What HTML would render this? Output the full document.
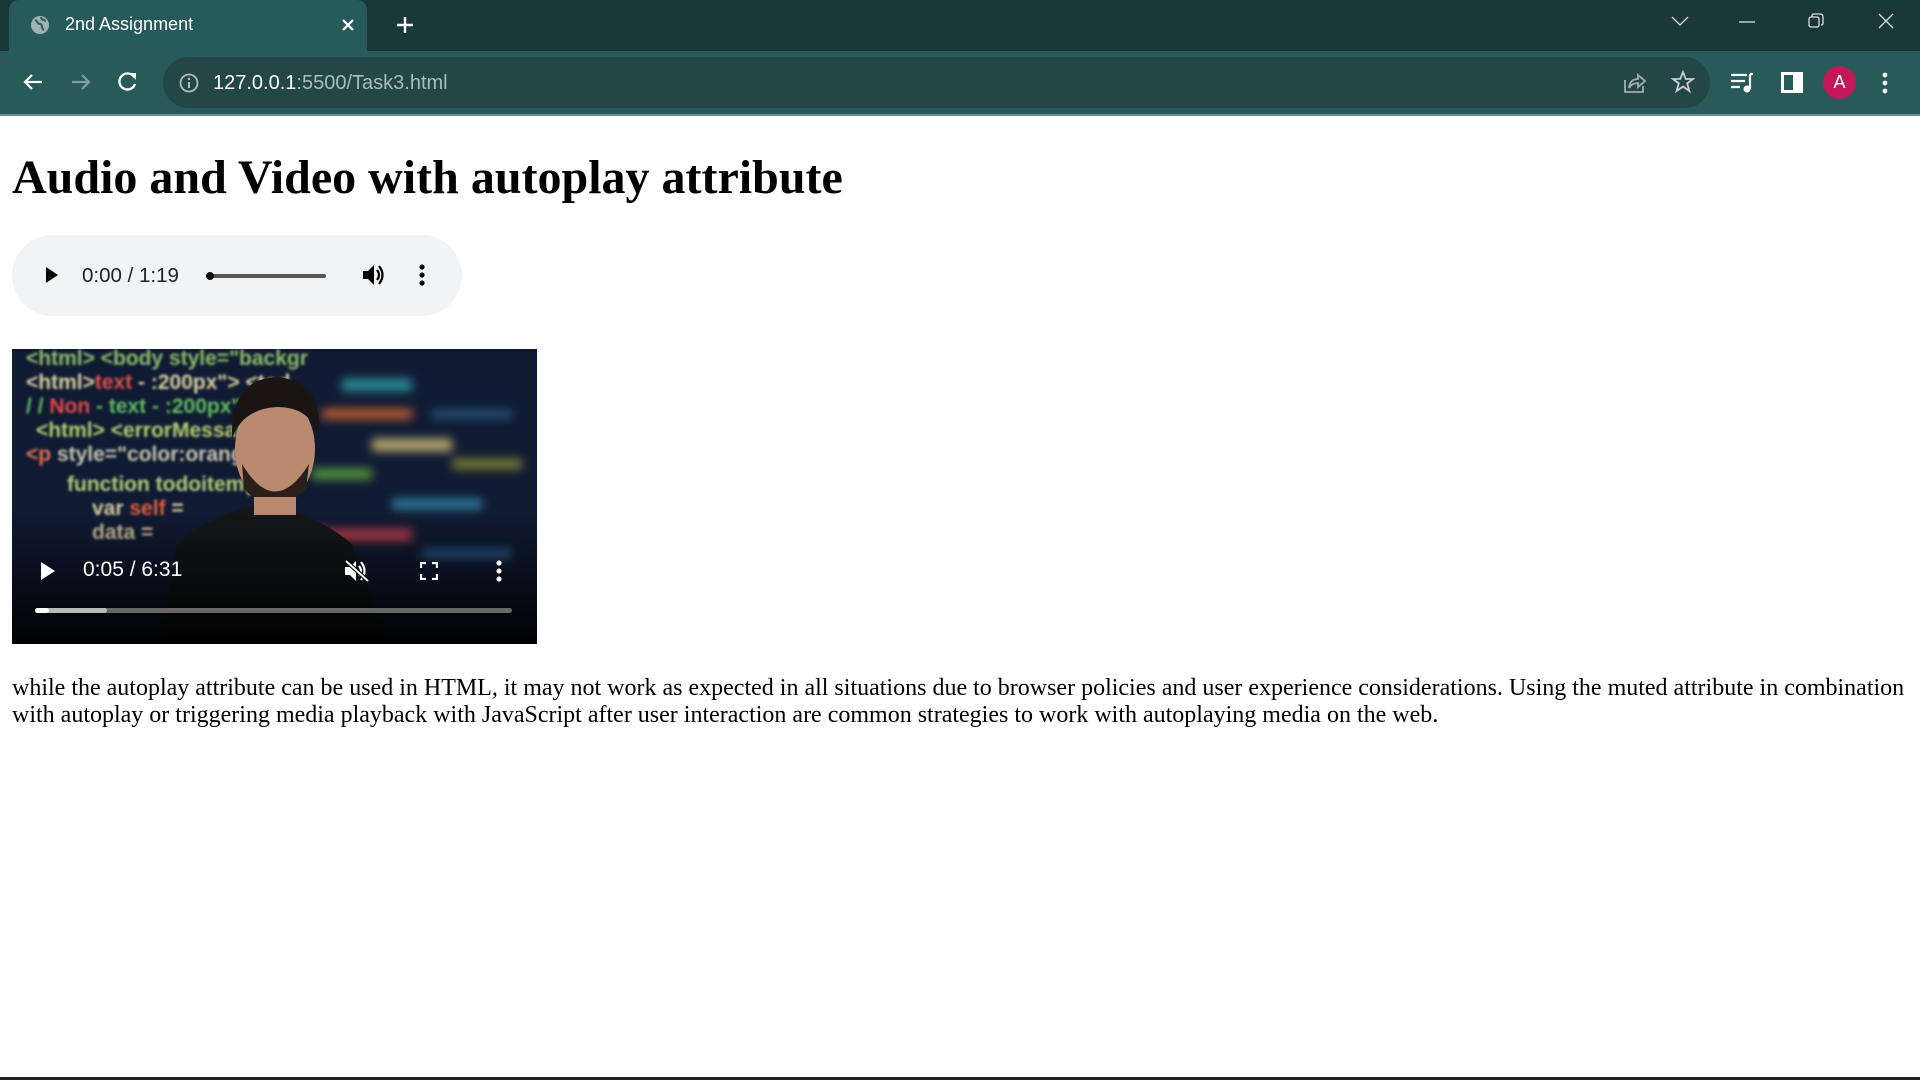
<!DOCTYPE html>
<html><head><meta charset="utf-8"><style>
*{margin:0;padding:0;box-sizing:border-box}
body{width:1920px;height:1080px;overflow:hidden;background:#fff;font-family:"Liberation Serif",serif;position:relative}
.top{position:absolute;left:0;top:0;width:1920px;height:51px;background:#1b3839}
.tab{position:absolute;left:9px;top:0;width:358px;height:53px;background:#275a5a;border-radius:10px 10px 0 0}
.tabt{position:absolute;left:65px;top:14px;color:#fff;font:18px "Liberation Sans",sans-serif}
.tb{position:absolute;left:0;top:51px;width:1920px;height:63px;background:#285a5a}
.omni{position:absolute;left:163px;top:57px;width:1547px;height:51px;background:#234647;border-radius:26px}
.url{position:absolute;left:213px;top:71px;font:20px "Liberation Sans",sans-serif;color:#fff}
.url span{color:#a9bcbc}
.line{position:absolute;left:0;top:114px;width:1920px;height:2px;background:#6e8c8c}
h1{position:absolute;left:12px;top:150px;font:bold 48px "Liberation Serif",serif;color:#000;white-space:nowrap}
.audio{position:absolute;left:12px;top:235px;width:450px;height:81px;background:#f1f3f4;border-radius:41px;font:20.5px "Liberation Sans",sans-serif;color:#222}
.video{position:absolute;left:12px;top:349px;width:525px;height:295px;overflow:hidden;background:#0c1426}
p{position:absolute;left:12px;top:675px;width:1900px;font-size:24px;line-height:27px;color:#000}
.bot{position:absolute;left:0;bottom:0;width:1920px;height:3px;background:#222}
</style></head><body>
<div class="top"></div>
<div class="tab"></div>
<svg style="position:absolute;left:30px;top:15px" width="20" height="20" viewBox="0 0 20 20"><circle cx="10" cy="10" r="9" fill="#9fb3b3"/><path d="M5 5c3 1 2 4 5 4s1 5 4 6M11 2c0 3 3 3 5 4" stroke="#275a5a" stroke-width="2" fill="none"/></svg>
<div class="tabt">2nd Assignment</div>
<svg style="position:absolute;left:341px;top:18px" width="14" height="14"><path d="M2 2L12 12M12 2L2 12" stroke="#fff" stroke-width="2.2"/></svg>
<svg style="position:absolute;left:396px;top:16px" width="18" height="18"><path d="M9 1V17M1 9H17" stroke="#fff" stroke-width="2.4"/></svg>
<svg style="position:absolute;left:1670px;top:14px" width="20" height="14"><path d="M2 3L10 11L18 3" stroke="#ddd" stroke-width="1.3" fill="none"/></svg>
<svg style="position:absolute;left:1739px;top:20px" width="16" height="4"><path d="M0 2H16" stroke="#ddd" stroke-width="1.3"/></svg>
<svg style="position:absolute;left:1808px;top:13px" width="16" height="16"><rect x="1" y="4" width="10" height="10" rx="2" stroke="#ddd" fill="none" stroke-width="1.3"/><path d="M4 4V2.5Q4 1 6 1H12Q15 1 15 4V10Q15 12 13 12" stroke="#ddd" fill="none" stroke-width="1.3"/></svg>
<svg style="position:absolute;left:1878px;top:13px" width="16" height="16"><path d="M1 1L15 15M15 1L1 15" stroke="#ddd" stroke-width="1.3"/></svg>
<div class="tb"></div>
<svg style="position:absolute;left:22px;top:72px" width="22" height="20"><path d="M20 10H3M10 3L3 10L10 17" stroke="#fff" stroke-width="2.2" fill="none"/></svg>
<svg style="position:absolute;left:70px;top:72px" width="22" height="20"><path d="M2 10H19M12 3L19 10L12 17" stroke="#7fa0a0" stroke-width="2.2" fill="none"/></svg>
<svg style="position:absolute;left:117px;top:71px" width="22" height="22"><path d="M17 6A8 8 0 1 0 18 13" stroke="#fff" stroke-width="2.3" fill="none"/><path d="M12 2H19V9Z" fill="#fff"/></svg>
<div class="omni"></div>
<svg style="position:absolute;left:179px;top:73px" width="20" height="20"><circle cx="10" cy="10" r="8.5" stroke="#bbb" stroke-width="1.8" fill="none"/><path d="M10 9V15" stroke="#bbb" stroke-width="2"/><circle cx="10" cy="6" r="1.2" fill="#bbb"/></svg>
<div class="url" style="top:72px">127.0.0.1<span>:5500/Task3.html</span></div>
<svg style="position:absolute;left:1622px;top:70px" width="24" height="24"><path d="M3 10V22H21V16" stroke="#aaa" stroke-width="1.8" fill="none"/><path d="M7 18Q8 9 16 9V5L23 11L16 17V13Q10 13 7 18Z" stroke="#aaa" stroke-width="1.8" fill="none"/></svg>
<svg style="position:absolute;left:1671px;top:70px" width="24" height="24"><path d="M12 2L14.8 9H22L16.2 13.4L18.4 21L12 16.5L5.6 21L7.8 13.4L2 9H9.2Z" stroke="#ccc" stroke-width="1.8" fill="none"/></svg>
<svg style="position:absolute;left:1730px;top:72px" width="24" height="22"><path d="M1 3H17M1 9H15M1 15H10" stroke="#fff" stroke-width="2.2"/><path d="M20 2V17" stroke="#fff" stroke-width="2.2"/><path d="M20 2H23" stroke="#fff" stroke-width="2.2"/><circle cx="17" cy="17" r="3.5" fill="#fff"/></svg>
<svg style="position:absolute;left:1781px;top:72px" width="22" height="21"><rect x="1.5" y="1.5" width="19" height="18" stroke="#fff" stroke-width="3" fill="none"/><rect x="12" y="1" width="9" height="19" fill="#fff"/></svg>
<div style="position:absolute;left:1823px;top:66px;width:33px;height:33px;border-radius:50%;background:#c2185b;color:#fff;font:18px 'Liberation Sans',sans-serif;text-align:center;line-height:33px">A</div>
<svg style="position:absolute;left:1881px;top:71px" width="8" height="24"><circle cx="4" cy="4" r="2.4" fill="#fff"/><circle cx="4" cy="12" r="2.4" fill="#fff"/><circle cx="4" cy="20" r="2.4" fill="#fff"/></svg>
<div class="line"></div>

<h1>Audio and Video with autoplay attribute</h1>

<div class="audio">
<svg style="position:absolute;left:32px;top:30px" width="16" height="20"><path d="M2 2L14 10L2 18Z" fill="#000"/></svg>
<div style="position:absolute;left:70px;top:29px">0:00 / 1:19</div>
<div style="position:absolute;left:194px;top:39px;width:120px;height:4px;border-radius:2px;background:#555"></div>
<div style="position:absolute;left:194px;top:37px;width:8px;height:8px;border-radius:50%;background:#111"></div>
<svg style="position:absolute;left:350px;top:29px" width="26" height="22"><path d="M1 7H6L12 1V21L6 15H1Z" fill="#000"/><path d="M15 6Q19 11 15 16M17 2Q24 11 17 20" stroke="#000" stroke-width="2.2" fill="none"/></svg>
<svg style="position:absolute;left:406px;top:29px" width="8" height="22"><circle cx="4" cy="3" r="2.6" fill="#000"/><circle cx="4" cy="11" r="2.6" fill="#000"/><circle cx="4" cy="19" r="2.6" fill="#000"/></svg>
</div>

<div class="video">
<svg width="525" height="295" style="position:absolute;left:0;top:0">
<defs><filter id="b"><feGaussianBlur stdDeviation="1.2"/></filter><filter id="b2"><feGaussianBlur stdDeviation="5"/></filter>
<linearGradient id="g" x1="0" y1="0" x2="0" y2="1"><stop offset="0.55" stop-color="#000" stop-opacity="0"/><stop offset="1" stop-color="#000" stop-opacity="0.95"/></linearGradient></defs>
<rect width="525" height="295" fill="#101a33"/>
<g filter="url(#b)" font-family="Liberation Sans,sans-serif" font-weight="bold" font-size="21">
<text x="14" y="16" fill="#8fbf6a">&lt;html&gt; &lt;body style="backgr</text>
<text x="14" y="40" fill="#d9d3a0">&lt;html&gt;<tspan fill="#e0504a">text</tspan> - :200px"&gt; &lt;tod</text>
<text x="14" y="64" fill="#60c060">/ / <tspan fill="#e84a4a">Non</tspan> - text - :200px"&gt;</text>
<text x="24" y="88" fill="#b8d070">&lt;html&gt; &lt;errorMessage</text>
<text x="14" y="112" fill="#e87050">&lt;p <tspan fill="#c9c8b0">style="color:orange;"</tspan></text>
<text x="55" y="142" fill="#b5d07a">function  todoitem(</text>
<text x="80" y="166" fill="#d9cfa0">var  <tspan fill="#e06040">self</tspan> =</text>
<text x="80" y="190" fill="#d6c9a0">data =</text>
</g>
<g filter="url(#b2)">
<rect x="330" y="30" width="70" height="12" fill="#2a8f9a"/><rect x="310" y="60" width="90" height="10" fill="#c06030"/><rect x="360" y="90" width="80" height="12" fill="#c0b070"/>
<rect x="300" y="120" width="60" height="10" fill="#5aa040"/><rect x="380" y="150" width="90" height="10" fill="#3080a0"/><rect x="300" y="180" width="100" height="12" fill="#c04050"/>
<rect x="420" y="60" width="80" height="10" fill="#205070"/><rect x="440" y="110" width="70" height="10" fill="#7a8030"/><rect x="410" y="200" width="90" height="10" fill="#2a6090"/>
</g>
<path d="M150 295L165 195Q200 165 250 155Q305 165 340 195L375 295Z" fill="#141618"/>
<ellipse cx="263" cy="100" rx="40" ry="55" fill="#b98a70"/>
<path d="M220 90Q218 30 265 28Q312 32 307 90Q300 58 265 58Q230 60 220 90Z" fill="#1a1512"/>
<path d="M230 115Q263 170 297 115L294 140Q263 172 232 140Z" fill="#2a1f1a"/>
<rect x="242" y="148" width="42" height="18" fill="#b98a70"/>
<rect width="525" height="295" fill="url(#g)"/>
</svg>
<svg style="position:absolute;left:28px;top:212px" width="16" height="20"><path d="M1 1L15 10L1 19Z" fill="#fff"/></svg>
<div style="position:absolute;left:71px;top:209px;color:#fff;font:21px 'Liberation Sans',sans-serif">0:05 / 6:31</div>
<svg style="position:absolute;left:332px;top:210px" width="26" height="24"><path d="M1 8H6L12 2V22L6 16H1Z" fill="#fff"/><path d="M15 7Q19 12 15 17M17 3Q24 12 17 21" stroke="#fff" stroke-width="2.2" fill="none"/><path d="M2 2L24 22" stroke="#000" stroke-width="4"/><path d="M2 2L24 22" stroke="#fff" stroke-width="2"/></svg>
<svg style="position:absolute;left:408px;top:213px" width="18" height="18"><path d="M1 6V1H6M12 1H17V6M17 12V17H12M6 17H1V12" stroke="#fff" stroke-width="2.2" fill="none"/></svg>
<svg style="position:absolute;left:483px;top:211px" width="8" height="22"><circle cx="4" cy="3" r="2.6" fill="#fff"/><circle cx="4" cy="11" r="2.6" fill="#fff"/><circle cx="4" cy="19" r="2.6" fill="#fff"/></svg>
<div style="position:absolute;left:23px;top:259px;width:477px;height:5px;border-radius:3px;background:#666"></div>
<div style="position:absolute;left:23px;top:259px;width:72px;height:5px;border-radius:3px;background:#bbb"></div>
<div style="position:absolute;left:23px;top:259px;width:14px;height:5px;border-radius:3px;background:#fff"></div>
</div>

<p>while the autoplay attribute can be used in HTML, it may not work as expected in all situations due to browser policies and user experience considerations. Using the muted attribute in combination with autoplay or triggering media playback with JavaScript after user interaction are common strategies to work with autoplaying media on the web.</p>
<div class="bot"></div>
</body></html>
